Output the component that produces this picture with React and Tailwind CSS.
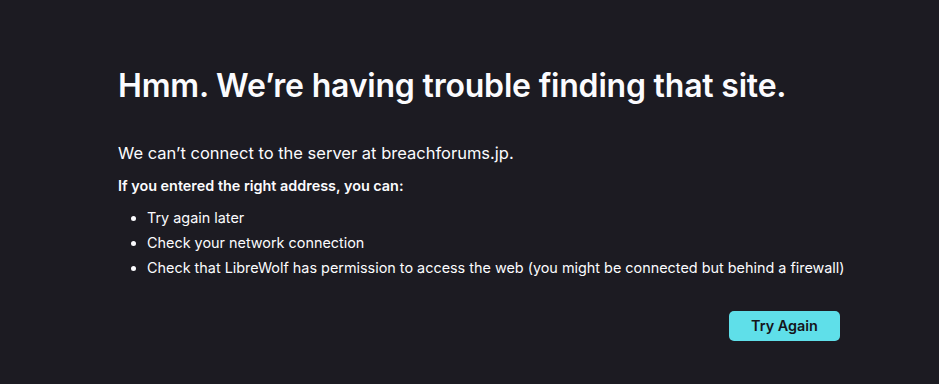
export default function App() {
  return (
    <div
      className="w-[939px] h-[384px] bg-[#1c1b22] text-[#fbfbfe] overflow-hidden"
      style={{ fontFamily: "Inter, 'Noto Sans', sans-serif" }}
    >
      <div className="ml-[118px] w-[722px] pt-[66px]">
        <h1 className="text-[32px] leading-[40px] font-semibold tracking-[-0.2px]">
          Hmm. We’re having trouble finding that site.
        </h1>
        <p className="mt-[35px] text-[16.5px] leading-[24px]">
          We can’t connect to the server at breachforums.jp.
        </p>
        <p className="mt-[10px] text-[14.4px] leading-[22px] font-semibold">
          If you entered the right address, you can:
        </p>
        <ul className="mt-[8px] list-disc pl-[29px] text-[14.4px] leading-[25px]">
          <li>Try again later</li>
          <li>Check your network connection</li>
          <li className="whitespace-nowrap">
            Check that LibreWolf has permission to access the web (you might be
            connected but behind a firewall)
          </li>
        </ul>
        <div className="mt-[31px] flex justify-end">
          <button className="h-[30px] w-[111px] rounded-[5px] bg-[#5fdfe9] text-[#15141a] text-[14.4px] font-semibold">
            Try Again
          </button>
        </div>
      </div>
    </div>
  );
}
